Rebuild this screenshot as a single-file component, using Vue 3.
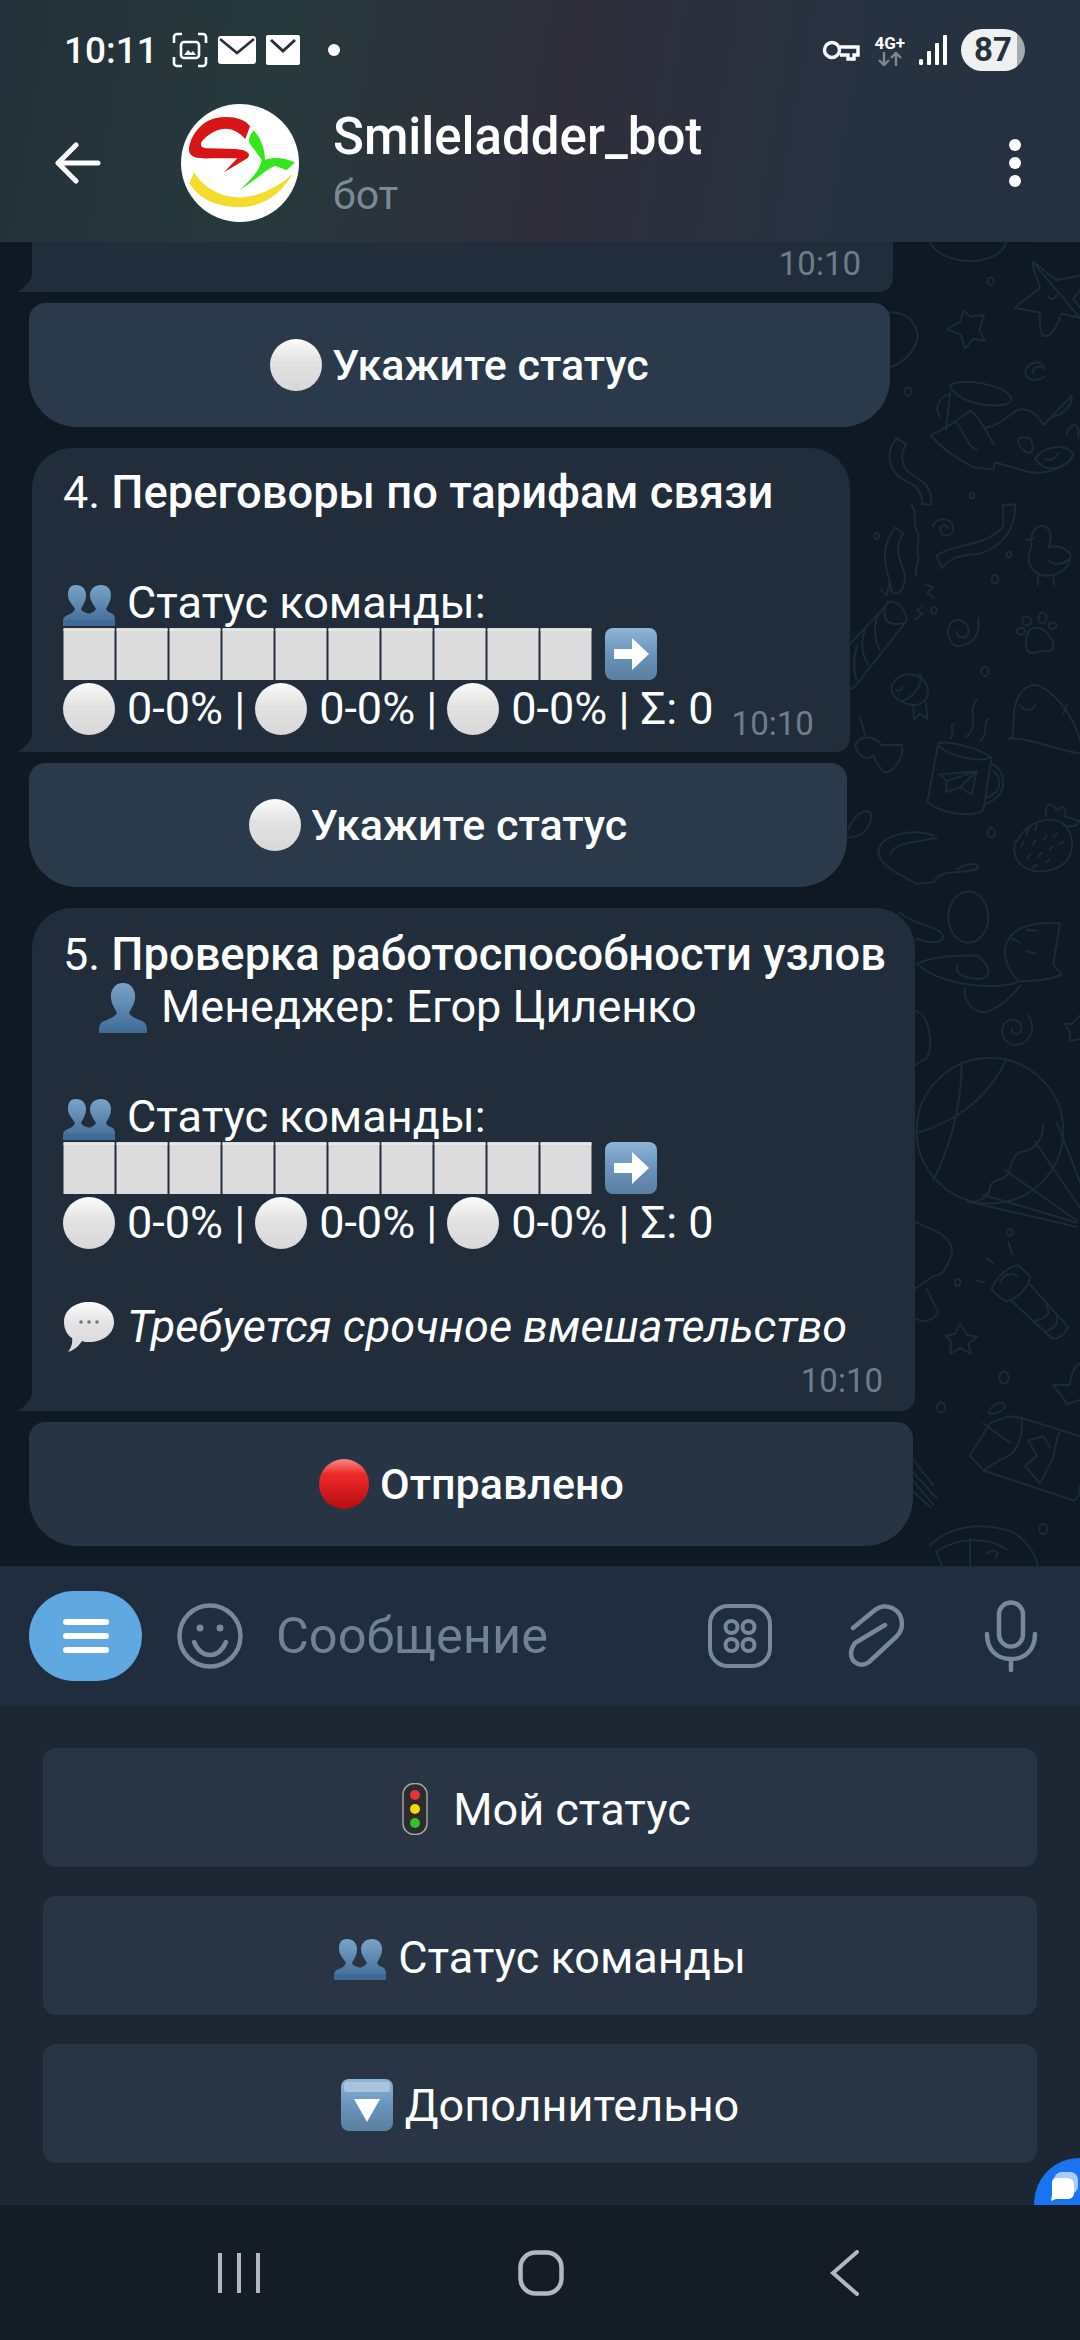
<template>
  <div class="phone">
    <svg class="defs" width="0" height="0" aria-hidden="true">
      <defs>
        <linearGradient id="g-white" x1="0" y1="0" x2="0" y2="1">
          <stop offset="0" stop-color="#fbfbfb" />
          <stop offset="0.45" stop-color="#e2e2e2" />
          <stop offset="1" stop-color="#d8d8d8" />
        </linearGradient>
        <linearGradient id="g-red" x1="0" y1="0" x2="0" y2="1">
          <stop offset="0" stop-color="#f58a8a" />
          <stop offset="0.3" stop-color="#ee2a2a" />
          <stop offset="1" stop-color="#b80d12" />
        </linearGradient>
        <linearGradient id="g-bust" x1="0" y1="0" x2="0" y2="1">
          <stop offset="0" stop-color="#7ba3c9" />
          <stop offset="1" stop-color="#3f6a96" />
        </linearGradient>
        <linearGradient id="g-tile" x1="0" y1="0" x2="0" y2="1">
          <stop offset="0" stop-color="#8fb4d6" />
          <stop offset="0.5" stop-color="#6a94bd" />
          <stop offset="1" stop-color="#5a7f9f" />
        </linearGradient>
        <symbol id="e-white" viewBox="0 0 52 52">
          <circle cx="26" cy="26" r="26" fill="url(#g-white)" />
        </symbol>
        <symbol id="e-red" viewBox="0 0 52 52">
          <circle cx="26" cy="26" r="25" fill="url(#g-red)" />
        </symbol>
        <symbol id="e-square" viewBox="0 0 52 52">
          <rect x="0.5" width="51" height="52" fill="#dcdcdc" />
          <rect x="0.5" y="1" width="51" height="2" fill="#e6e6e6" />
        </symbol>
        <symbol id="e-arrow" viewBox="0 0 52 52">
          <rect width="52" height="52" rx="8" fill="url(#g-tile)" />
          <path d="M9 21h18V10l17 16-17 16V31H9z" fill="#fff" />
        </symbol>
        <symbol id="e-down" viewBox="0 0 52 52">
          <rect width="52" height="52" rx="8" fill="url(#g-tile)" />
          <rect x="3" y="3" width="46" height="10" rx="3" fill="#a9c4dc" />
          <path d="M13 20h26L26 43z" fill="#fff" />
        </symbol>
        <symbol id="e-bust" viewBox="0 0 52 52">
          <path d="M26 2c9 0 13 8 12 16-1 6-4 10-6 14 2 4 8 6 13 8 3 1 5 4 5 10v2H2v-2c0-6 2-9 5-10 5-2 11-4 13-8-2-4-5-8-6-14C13 10 17 2 26 2z" fill="url(#g-bust)" />
        </symbol>
        <symbol id="e-busts" viewBox="0 0 52 52">
          <path d="M38 8c6 0 10 4 10 10 0 6-3 10-5 14 1 3 5 4 7 5 1 1 2 3 2 6v6H26V37c3-1 6-3 7-5-2-4-6-8-6-14 0-6 5-10 11-10z" fill="url(#g-bust)" />
          <path d="M13 8c6 0 10 4 10 10 0 6-3 10-5 14 1 3 6 4 9 5 3 2 5 6 5 12H0v-6c1-3 2-4 5-5 3-1 6-3 7-6-2-4-7-8-7-14C5 12 7 8 13 8z" fill="url(#g-bust)" />
          <rect y="43" width="52" height="6" fill="#3f6a96" />
        </symbol>
        <symbol id="e-speech" viewBox="0 0 52 52">
          <path d="M26 1c14 0 25 8 25 20S40 41 26 41c-3 0-5 0-7-1-3 5-8 9-14 11 3-4 5-9 4-14C4 34 1 28 1 21 1 9 12 1 26 1z" fill="url(#g-white)" />
          <circle cx="18" cy="21" r="1.8" fill="#777" />
          <circle cx="26" cy="21" r="1.8" fill="#777" />
          <circle cx="34" cy="21" r="1.8" fill="#777" />
        </symbol>
        <symbol id="e-traffic" viewBox="0 0 52 52">
          <rect x="14" y="0.5" width="24" height="51" rx="11" fill="#2c2c2c" stroke="#a8a8a8" stroke-width="1.4" />
          <circle cx="26" cy="12" r="5" fill="#e8323c" />
          <circle cx="26" cy="26" r="5" fill="#f2d90e" />
          <circle cx="26" cy="40" r="5" fill="#2fc22f" />
        </symbol>
      </defs>
    </svg>

    <header class="topbar">
      <div class="status-bar">
        <div class="status-left">
          <span class="clock">10:11</span>
          <svg class="ic-shot" width="36" height="36" viewBox="0 0 36 36" fill="none" stroke="#fff" stroke-width="2.6">
            <path d="M2 11V5a3 3 0 013-3h5M26 2h5a3 3 0 013 3v6M34 25v6a3 3 0 01-3 3h-5M10 34H5a3 3 0 01-3-3v-6" />
            <rect x="9" y="10" width="18" height="16" rx="3" />
            <path d="M12 23l4-5 3 3 2-2 3 4z" fill="#fff" stroke="none" />
          </svg>
          <svg width="38" height="28" viewBox="0 0 38 28">
            <rect width="38" height="28" rx="3" fill="#fff" />
            <path d="M2 3l17 14L36 3" fill="none" stroke="#26313e" stroke-width="2.6" />
          </svg>
          <svg width="34" height="30" viewBox="0 0 34 30">
            <rect width="34" height="30" rx="2" fill="#fff" />
            <path d="M5 5l12 11L29 5" fill="none" stroke="#26313e" stroke-width="3" />
          </svg>
          <span class="status-dot"></span>
        </div>
        <div class="status-right">
          <svg width="38" height="22" viewBox="0 0 38 22" fill="none" stroke="#fff" stroke-width="3.4">
            <circle cx="10" cy="11" r="7.5" />
            <path d="M18 8h18v8h-4v4h-6v-4h-8" />
          </svg>
          <div class="net">
            <span class="net-type">4G+</span>
            <svg width="26" height="14" viewBox="0 0 26 14" fill="none" stroke="#7c8791" stroke-width="2.4">
              <path d="M7 0v13M2 8l5 5 5-5M19 14V1M14 6l5-5 5 5" />
            </svg>
          </div>
          <svg width="28" height="30" viewBox="0 0 28 30" fill="#fff">
            <rect x="0" y="24" width="4" height="6" rx="1.5" />
            <rect x="8" y="16" width="4" height="14" rx="1" />
            <rect x="16" y="8" width="4" height="22" rx="1" />
            <rect x="24" y="0" width="4" height="30" rx="1" />
          </svg>
          <div class="battery">87</div>
        </div>
      </div>
      <div class="chat-title">
        <svg class="back" width="46" height="42" viewBox="0 0 46 42" fill="none" stroke="#fff" stroke-width="5" stroke-linecap="round" stroke-linejoin="round">
          <path d="M43 21H4M21 3L3 21l18 18" />
        </svg>
        <svg class="avatar" width="118" height="118" viewBox="93 73 354 354">
          <circle cx="270" cy="250" r="177" fill="#fff" />
          <path d="M300 140c-16-24-60-34-105-24-48 12-78 62-78 96 2 30 50 24 80 24l65 0-40 42 70-42c14-14-2-26-36-28l-85-2c-25-2-25-18 5-40 32-24 72-30 110 12z" fill="#d81414" />
          <path d="M310 152c-10 13-15 28-12 38l37 50c-5 34-35 62-67 92 52-32 75-60 107-74l35 14 25-24c-35-16-65-16-90-8 0-25-10-65-35-88z" fill="#33e81a" />
          <path d="M132 278c38 62 108 84 168 72 50-10 100-40 128-68-33 58-88 103-168 100-70-2-120-32-142-72z" fill="#f3dc2c" />
        </svg>
        <div class="title-text">
          <div class="bot-name">Smileladder_bot</div>
          <div class="bot-sub">бот</div>
        </div>
        <svg class="more" width="12" height="48" viewBox="0 0 12 48" fill="#fff">
          <circle cx="6" cy="6" r="6" />
          <circle cx="6" cy="24" r="6" />
          <circle cx="6" cy="42" r="6" />
        </svg>
      </div>
    </header>

    <main class="chat">
      <svg class="doodles" width="1080" height="1324" viewBox="0 0 1080 1324" fill="none" stroke="#1d2a37" stroke-width="2" stroke-linejoin="round" stroke-linecap="round">
        <!-- right column, upper part -->
        <g transform="translate(840 -2) scale(0.3333 0.4209)">
          <path vector-effect="non-scaling-stroke" d="M578 52C600 60 625 85 650 95L720 85M720 185L665 175C650 205 635 232 610 228 595 215 600 180 600 172L525 162C540 145 590 125 600 112 590 90 578 70 578 52ZM625 135C635 145 645 140 650 130M720 120L700 140 720 160" />
          <path vector-effect="non-scaling-stroke" d="M370 168L392 182 432 178 418 215 435 240 400 235 375 258 362 225 322 212 360 195Z" />
          <path vector-effect="non-scaling-stroke" d="M612 300C600 285 565 290 556 310 552 330 580 340 612 325M612 305C595 295 575 305 580 315" />
          <path vector-effect="non-scaling-stroke" d="M270 5C300 60 470 70 500 5M150 172C220 170 240 220 230 240 220 270 180 295 150 302" />
          <path vector-effect="non-scaling-stroke" d="M330 345C360 325 510 345 515 380 505 405 350 395 330 345ZM330 365C300 370 280 400 300 420M330 365L318 450M272 465C300 450 340 440 390 405 420 420 450 470 460 485M272 465C300 490 340 515 400 540L460 545 465 528 560 550C620 560 680 540 700 510M440 445C480 440 500 420 530 405 560 395 590 410 610 440L695 370C700 385 680 410 640 420M350 435C370 450 380 490 410 498" />
          <path vector-effect="non-scaling-stroke" d="M585 520C610 490 680 480 700 510 690 540 620 560 585 520ZM615 520C630 525 650 520 655 505M560 505C530 490 525 465 550 470 570 465 585 480 575 505ZM680 460C700 425 720 440 715 470" />
          <path vector-effect="non-scaling-stroke" d="M170 470L198 485C175 520 190 545 220 560 255 575 275 590 275 628L248 628C245 590 220 580 190 570 150 550 130 510 170 470Z" />
          <path vector-effect="non-scaling-stroke" d="M215 630C235 650 215 670 230 690 245 710 225 730 235 750 240 770 220 780 230 798" />
          <path vector-effect="non-scaling-stroke" d="M278 680C290 655 340 660 340 685 335 710 300 705 300 685 305 675 320 675 325 685" />
          <path vector-effect="non-scaling-stroke" d="M290 750C340 720 440 730 490 680 490 660 490 640 488 630L525 628C530 680 490 730 420 745 380 750 340 745 305 780Z" />
          <path vector-effect="non-scaling-stroke" d="M600 680C630 675 640 705 625 730 650 725 680 730 692 750 690 785 640 805 600 795 570 785 555 760 575 730 570 700 580 685 600 680ZM595 795L592 820M640 800L642 820M625 760C640 775 670 770 685 760M580 710L560 712" />
          <path vector-effect="non-scaling-stroke" d="M165 683L190 698C160 730 180 760 195 795 195 830 175 850 155 835 150 800 130 780 135 740 140 710 155 695 165 683ZM122 830L140 845 148 815" />
          <path vector-effect="non-scaling-stroke" d="M150 858C175 860 200 880 200 905L40 1065 20 1065M150 858C130 865 130 890 140 905 155 915 185 915 200 905M30 960L150 858M120 975C100 945 100 910 118 885M85 1010C65 985 60 960 75 925M50 1045C40 1020 40 1000 50 965" />
          <path vector-effect="non-scaling-stroke" d="M255 818L280 825 262 838 280 850M248 868L230 880 248 888 225 902" />
          <path vector-effect="non-scaling-stroke" d="M415 900C425 950 380 965 350 965 320 955 315 920 340 905 365 895 390 915 385 935 375 950 350 945 350 930" />
          <path vector-effect="non-scaling-stroke" d="M570 925C595 915 620 925 630 945 650 960 640 985 610 975 590 980 560 990 558 965 555 945 560 935 570 925Z" />
          <ellipse vector-effect="non-scaling-stroke" cx="543" cy="929" rx="12" ry="8" />
          <ellipse vector-effect="non-scaling-stroke" cx="560" cy="905" rx="13" ry="11" />
          <ellipse vector-effect="non-scaling-stroke" cx="608" cy="898" rx="12" ry="13" />
          <ellipse vector-effect="non-scaling-stroke" cx="638" cy="916" rx="12" ry="8" />
          <path vector-effect="non-scaling-stroke" d="M155 1060C170 1025 240 1020 262 1060 270 1090 250 1105 220 1105 180 1100 150 1085 155 1060ZM220 1105L222 1140 240 1125 262 1138 258 1100M190 1095C230 1080 250 1050 240 1030M168 1068C175 1075 185 1070 188 1062" />
          <path vector-effect="non-scaling-stroke" d="M45 1200C60 1175 100 1175 125 1200L185 1200C195 1225 160 1265 135 1265 110 1250 105 1230 100 1225 75 1240 55 1225 45 1200ZM60 1135L75 1175" />
          <path vector-effect="non-scaling-stroke" d="M295 1195L262 1335C300 1360 390 1375 430 1355L455 1230C420 1210 340 1190 295 1195ZM300 1205C340 1230 420 1240 450 1230M455 1245C500 1260 510 1320 435 1340M460 1262C485 1275 490 1310 440 1325M300 1270L410 1262 395 1318 360 1300 318 1312 320 1285ZM320 1285L410 1262M360 1300L410 1262M330 1185C350 1165 325 1155 340 1150M380 1180C420 1150 380 1120 410 1092M420 1190C450 1170 425 1150 445 1138" />
          <path vector-effect="non-scaling-stroke" d="M505 1185C520 1185 520 1170 522 1120 530 1070 570 1050 600 1060 650 1080 700 1130 720 1190M505 1185C560 1180 640 1210 720 1220M540 1105C555 1120 575 1120 585 1105M670 1125L680 1105" />
          <path vector-effect="non-scaling-stroke" d="M530 1430C560 1380 640 1360 680 1395 710 1430 700 1480 640 1495 580 1510 510 1490 525 1430ZM620 1370C610 1330 640 1340 650 1355 670 1340 680 1350 675 1370L718 1380C710 1395 690 1395 670 1390M565 1400L560 1412M590 1390L585 1402M550 1430L545 1442M585 1425L580 1437M620 1415L612 1425M650 1410L640 1418M570 1460L562 1470M605 1455L595 1465M640 1440L630 1448M670 1430L660 1436M590 1485L580 1490M630 1470L620 1478" />
          <path vector-effect="non-scaling-stroke" d="M280 1415C240 1400 130 1405 115 1450 115 1490 190 1510 230 1530L285 1525C290 1490 400 1510 415 1490 410 1475 370 1485 350 1495M150 1460C160 1430 240 1430 290 1420M20 1420C80 1420 100 1380 90 1360 70 1350 40 1370 25 1400" />
          <circle vector-effect="non-scaling-stroke" cx="452" cy="98" r="9" />
          <circle vector-effect="non-scaling-stroke" cx="203" cy="360" r="10" />
          <circle vector-effect="non-scaling-stroke" cx="396" cy="607" r="7" />
          <circle vector-effect="non-scaling-stroke" cx="507" cy="747" r="7" />
          <circle vector-effect="non-scaling-stroke" cx="465" cy="806" r="10" />
          <circle vector-effect="non-scaling-stroke" cx="435" cy="1025" r="11" />
          <circle vector-effect="non-scaling-stroke" cx="454" cy="1408" r="11" />
          <circle vector-effect="non-scaling-stroke" cx="110" cy="703" r="7" />
          <circle vector-effect="non-scaling-stroke" cx="282" cy="880" r="8" />
        </g>
        <!-- right column, lower part -->
        <g transform="translate(880 658) scale(0.3333 0.4273)">
          <circle vector-effect="non-scaling-stroke" cx="265" cy="40" r="60" />
          <path vector-effect="non-scaling-stroke" d="M60 30C100 60 190 60 190 90 170 110 110 90 110 90M110 150C160 130 240 130 290 130 330 150 340 180 300 185 250 185 220 170 235 150M120 155C200 205 360 210 420 190M255 205C250 240 280 265 320 262 360 250 400 225 420 200" />
          <path vector-effect="non-scaling-stroke" d="M380 100C400 60 470 50 540 55L530 100 520 150 545 175C500 190 450 190 420 190 385 170 365 130 380 100ZM395 90L420 100M440 120L465 125M440 70L470 72" />
          <path vector-effect="non-scaling-stroke" d="M445 270C475 310 440 340 400 340 365 330 355 300 380 285 410 270 435 295 420 310 405 320 395 310 395 300" />
          <path vector-effect="non-scaling-stroke" d="M600 270L575 290 555 290 570 310 570 330 600 325" />
          <ellipse vector-effect="non-scaling-stroke" cx="330" cy="540" rx="220" ry="170" />
          <path vector-effect="non-scaling-stroke" d="M245 380C245 480 210 580 160 655M110 545C210 525 320 470 378 375M270 705C300 710 330 690 330 670 340 650 370 660 385 640 395 620 400 595 420 590 450 590 490 570 490 525M310 690L590 755M260 705L590 765M375 632L590 750M465 565L600 720M530 520L600 660" />
          <path vector-effect="non-scaling-stroke" d="M335 910C350 880 390 855 415 855L450 880C450 900 420 930 380 940 360 930 340 920 335 910ZM450 900L565 1000C550 1020 530 1030 515 1025L390 935M360 895C370 875 400 870 410 880M500 950C510 965 510 975 465 985M530 975C535 990 530 1000 495 1010M290 890L312 895M322 840L340 850M385 800L398 830" />
          <path vector-effect="non-scaling-stroke" d="M240 992L262 1018 292 1022 265 1038 272 1062 242 1048 210 1062 215 1035 197 1020 225 1015Z" />
          <path vector-effect="non-scaling-stroke" d="M108 260C150 270 160 340 140 370L108 385M108 755C160 770 225 790 215 830 200 860 190 880 160 880L105 910M140 910L175 965C160 985 130 990 108 980" />
          <path vector-effect="non-scaling-stroke" d="M600 1085C580 1090 570 1120 570 1135L520 1135C530 1150 550 1160 560 1180L600 1170" />
          <path vector-effect="non-scaling-stroke" d="M425 1212L600 1255M310 1335L580 1405C600 1400 600 1380 600 1370M270 1300L330 1225 385 1208 425 1212C430 1260 410 1300 360 1310L310 1335 270 1300ZM310 1225L390 1270M540 1245C520 1270 530 1300 510 1320L480 1365 435 1325 470 1300 445 1265 490 1255 510 1280M325 1200C340 1175 375 1170 375 1185 365 1200 340 1205 325 1200Z" />
          <path vector-effect="non-scaling-stroke" d="M150 1510C200 1470 300 1450 400 1480 440 1500 465 1530 475 1558M170 1525C230 1490 330 1490 380 1520M270 1495L270 1558M170 1525L185 1558M320 1530C340 1515 365 1525 345 1540" />
          <path vector-effect="non-scaling-stroke" d="M100 1310L160 1370M100 1340L170 1400M100 1360L160 1415M100 1385L150 1420" />
          <circle vector-effect="non-scaling-stroke" cx="390" cy="778" r="8" />
          <circle vector-effect="non-scaling-stroke" cx="233" cy="895" r="8" />
          <circle vector-effect="non-scaling-stroke" cx="372" cy="1118" r="14" />
          <circle vector-effect="non-scaling-stroke" cx="183" cy="1188" r="12" />
          <circle vector-effect="non-scaling-stroke" cx="490" cy="1472" r="12" />
        </g>
      </svg>

      <section class="bubble bubble-stub">
        <span class="time">10:10</span>
      </section>
      <div class="inline-btn btn-first">
        <svg class="emo"><use href="#e-white" /></svg>
        <span>Укажите статус</span>
      </div>

      <section class="bubble bubble-four">
        <div class="line"><span>4. <b>Переговоры по тарифам связи</b></span></div>
        <div class="line line-gap emo-line">
          <svg class="emo"><use href="#e-busts" /></svg>
          <span>Статус команды:</span>
        </div>
        <div class="bar">
          <svg v-for="n in 10" :key="n" class="emo"><use href="#e-square" /></svg>
          <svg class="emo arrow"><use href="#e-arrow" /></svg>
        </div>
        <div class="line emo-line counts">
          <template v-for="n in 3" :key="n">
            <svg class="emo"><use href="#e-white" /></svg>
            <span>0-0% {{ n < 3 ? '|' : '| Σ: 0' }}</span>
          </template>
          <span class="time time-inline">10:10</span>
        </div>
      </section>
      <div class="inline-btn btn-second">
        <svg class="emo"><use href="#e-white" /></svg>
        <span>Укажите статус</span>
      </div>

      <section class="bubble bubble-five">
        <div class="line"><span>5. <b>Проверка работоспособности узлов</b></span></div>
        <div class="line emo-line manager">
          <svg class="emo"><use href="#e-bust" /></svg>
          <span>Менеджер: Егор Циленко</span>
        </div>
        <div class="line line-gap emo-line">
          <svg class="emo"><use href="#e-busts" /></svg>
          <span>Статус команды:</span>
        </div>
        <div class="bar">
          <svg v-for="n in 10" :key="n" class="emo"><use href="#e-square" /></svg>
          <svg class="emo arrow"><use href="#e-arrow" /></svg>
        </div>
        <div class="line emo-line counts">
          <template v-for="n in 3" :key="n">
            <svg class="emo"><use href="#e-white" /></svg>
            <span>0-0% {{ n < 3 ? '|' : '| Σ: 0' }}</span>
          </template>
        </div>
        <div class="line line-gap-short emo-line">
          <svg class="emo"><use href="#e-speech" /></svg>
          <i>Требуется срочное вмешательство</i>
        </div>
        <div class="time-row"><span class="time">10:10</span></div>
      </section>
      <div class="inline-btn btn-third">
        <svg class="emo"><use href="#e-red" /></svg>
        <span>Отправлено</span>
      </div>
    </main>

    <div class="input-bar">
      <div class="menu-btn">
        <span></span><span></span><span></span>
      </div>
      <svg class="smile" width="66" height="66" viewBox="0 0 66 66" fill="none" stroke="#76889a" stroke-width="4.5" stroke-linecap="round">
        <circle cx="33" cy="33" r="30.5" />
        <path d="M17 39c4 9 10 13 16 13s12-4 16-13" />
        <circle cx="23" cy="25" r="3.5" fill="#76889a" stroke="none" />
        <circle cx="43" cy="25" r="3.5" fill="#76889a" stroke="none" />
      </svg>
      <span class="placeholder">Сообщение</span>
      <svg class="stickers" width="66" height="66" viewBox="0 0 66 66" fill="none" stroke="#76889a" stroke-width="4">
        <rect x="3" y="3" width="60" height="60" rx="18" />
        <circle cx="24.5" cy="24" r="6" />
        <circle cx="41.5" cy="24" r="6" />
        <circle cx="24.5" cy="42" r="6" />
        <circle cx="41.5" cy="42" r="6" />
      </svg>
      <svg class="clip" width="58" height="66" viewBox="0 0 58 66" fill="none" stroke="#76889a" stroke-width="4.5" stroke-linecap="round" stroke-linejoin="round">
        <path d="M5 25L27 7c10-8 27-2 27 14 0 5-2 9-6 13L21 59c-8 6-18 1-18-9 0-4 2-7 4-10L37 22" />
      </svg>
      <svg class="mic" width="54" height="72" viewBox="0 0 54 72" fill="none" stroke="#76889a" stroke-width="4.5" stroke-linecap="round">
        <rect x="15" y="2.5" width="24" height="44" rx="12" />
        <path d="M3 34c0 16 10 25 24 25s24-9 24-25M27 59v11" />
      </svg>
    </div>

    <div class="keyboard">
      <div class="key">
        <svg class="emo"><use href="#e-traffic" /></svg>
        <span>Мой статус</span>
      </div>
      <div class="key">
        <svg class="emo"><use href="#e-busts" /></svg>
        <span>Статус команды</span>
      </div>
      <div class="key">
        <svg class="emo"><use href="#e-down" /></svg>
        <span>Дополнительно</span>
      </div>
      <svg class="float-chat" width="46" height="47" viewBox="0 0 46 47">
        <path d="M46 0C20 0 0 20 0 47h46z" fill="#1a73f0" />
        <rect x="20" y="14" width="24" height="22" rx="8" fill="#a9cbf6" />
        <path d="M22 20h10c6 0 8 3 8 7v8c0 4-3 6-7 6H22l-5 2 1-6v-11c0-4 1-6 4-6z" fill="#fff" />
      </svg>
    </div>

    <nav class="nav-bar">
      <svg width="42" height="44" viewBox="0 0 42 44" fill="none" stroke="#b4b8bc" stroke-width="4">
        <path d="M2 2v40M21 2v40M40 2v40" />
      </svg>
      <svg width="46" height="46" viewBox="0 0 46 46" fill="none" stroke="#b4b8bc" stroke-width="4.5">
        <rect x="2.5" y="2.5" width="41" height="41" rx="15" />
      </svg>
      <svg width="30" height="46" viewBox="0 0 30 46" fill="none" stroke="#b4b8bc" stroke-width="4" stroke-linecap="round">
        <path d="M27 2L3 23l24 21" />
      </svg>
    </nav>
  </div>
</template>

<script setup>
</script>

<style>
html, body {
  margin: 0;
  background: #0f1923;
}
</style>

<style scoped>
.phone {
  width: 1080px;
  height: 2340px;
  display: flex;
  flex-direction: column;
  overflow: hidden;
  font-family: Roboto, "Noto Sans", sans-serif;
  color: #fff;
  position: relative;
}

.defs {
  position: absolute;
}

.topbar {
  height: 242px;
  flex-shrink: 0;
  box-sizing: border-box;
  background: linear-gradient(100deg, #233039 0%, #27393c 25%, #2f2e3a 52%, #273241 78%, #253140 100%);
  position: relative;
  z-index: 2;
}

.status-bar {
  height: 100px;
  display: flex;
  justify-content: space-between;
  align-items: center;
  padding: 0 55px 0 64px;
}

.status-left,
.status-right {
  display: flex;
  align-items: center;
}

.status-left svg {
  margin-left: 10px;
}

.clock {
  font-size: 37px;
  font-weight: 500;
  margin-right: 4px;
}

.status-dot {
  width: 12px;
  height: 12px;
  border-radius: 50%;
  background: #fff;
  margin-left: 28px;
}

.status-right {
  gap: 14px;
}

.net {
  display: flex;
  flex-direction: column;
  align-items: center;
  gap: 1px;
}

.net-type {
  font-size: 17px;
  font-weight: 700;
  line-height: 16px;
}

.battery {
  width: 64px;
  height: 42px;
  border-radius: 21px;
  background: linear-gradient(90deg, #eef0f2 0 88%, #a6abb0 88%);
  color: #26313e;
  font-size: 33px;
  font-weight: 700;
  line-height: 42px;
  text-align: center;
}

.chat-title {
  height: 126px;
  margin-top: 0;
  display: flex;
  align-items: center;
  padding: 0 62px 0 55px;
}

.avatar {
  margin-left: 80px;
  flex-shrink: 0;
}

.title-text {
  margin-left: 34px;
  flex: 1;
}

.more {
  margin-right: -3px;
}

.bot-name {
  font-size: 51px;
  font-weight: 500;
  line-height: 58px;
}

.bot-sub {
  font-size: 41px;
  line-height: 46px;
  color: #7c8a98;
  margin-top: 6px;
}

.chat {
  flex: 1;
  min-height: 0;
  background: #0f1923;
  position: relative;
  display: flex;
  flex-direction: column;
  align-items: flex-start;
  font-size: 45px;
}

.doodles {
  position: absolute;
  left: 0;
  top: 0;
}

.bubble {
  position: relative;
  background: #212d3b;
  box-sizing: border-box;
  border-radius: 40px 40px 14px 0;
  margin-left: 32px;
  line-height: 52px;
}

.bubble::before {
  content: "";
  position: absolute;
  left: -15px;
  bottom: 0;
  width: 16px;
  height: 24px;
  background: #212d3b;
  clip-path: path("M16 0 C16 12 8 20 0 24 L16 24 Z");
}

.bubble-stub {
  width: 861px;
  height: 50px;
  border-radius: 0 0 14px 0;
  display: flex;
  justify-content: flex-end;
  padding-right: 32px;
}

.bubble-four {
  width: 818px;
  margin-top: 21px;
  padding: 19px 0 17px 31px;
}

.bubble-five {
  width: 883px;
  margin-top: 21px;
  padding: 21px 0 8px 31px;
}

.line {
  height: 52px;
  white-space: nowrap;
}

.line b {
  font-size: 45.3px;
  font-weight: 500;
}

.line-gap {
  margin-top: 58px;
}

.line-gap-short {
  margin-top: 52px;
}

.emo-line {
  display: flex;
  align-items: center;
}

.emo-line > span,
.emo-line > i {
  margin-left: 12px;
}

.emo {
  width: 52px;
  height: 52px;
  flex-shrink: 0;
}

.manager {
  padding-left: 34px;
}

.bar {
  display: flex;
  height: 52px;
  margin-top: -1px;
}

.bar .emo {
  margin-right: 1px;
}

.bar .arrow {
  margin-left: 12px;
}

.counts {
  margin-top: 3px;
}

.counts > span {
  margin-right: 10px;
}

.time {
  font-size: 33px;
  color: #6d7d8c;
  line-height: 44px;
}

.time-inline {
  margin: 30px 0 0 8px !important;
}

.time-row {
  display: flex;
  justify-content: flex-end;
  padding-right: 32px;
  margin-top: 6px;
}

.inline-btn {
  height: 124px;
  margin-top: 11px;
  margin-left: 29px;
  box-sizing: border-box;
  background: #2a3a4b;
  border-radius: 16px 16px 48px 48px;
  display: flex;
  align-items: center;
  justify-content: center;
  gap: 10px;
  font-size: 43px;
  font-weight: 500;
}

.btn-first {
  width: 861px;
}

.btn-second {
  width: 818px;
}

.btn-third {
  width: 884px;
  background: #273444;
}

.input-bar {
  height: 139px;
  flex-shrink: 0;
  background: #1f2d3e;
  display: flex;
  align-items: center;
  padding: 0 42px 0 29px;
}

.menu-btn {
  width: 113px;
  height: 90px;
  border-radius: 45px;
  background: #5fa8e0;
  display: flex;
  flex-direction: column;
  align-items: center;
  justify-content: center;
  gap: 8px;
  flex-shrink: 0;
}

.menu-btn span {
  width: 46px;
  height: 6px;
  border-radius: 3px;
  background: #fff;
}

.smile {
  margin-left: 35px;
  flex-shrink: 0;
}

.placeholder {
  margin-left: 33px;
  font-size: 50.5px;
  color: #70818f;
  flex: 1;
}

.clip {
  margin-left: 75px;
}

.mic {
  margin-left: 78px;
}

.keyboard {
  height: 500px;
  flex-shrink: 0;
  box-sizing: border-box;
  background: #1d2733;
  padding: 43px 43px 0;
  display: flex;
  flex-direction: column;
  gap: 29px;
  position: relative;
}

.key {
  height: 119px;
  box-sizing: border-box;
  padding-top: 3px;
  border-radius: 13px;
  background: #293544;
  display: flex;
  align-items: center;
  justify-content: center;
  gap: 12px;
  font-size: 45px;
}

.float-chat {
  position: absolute;
  right: 0;
  bottom: 0;
}

.nav-bar {
  height: 135px;
  flex-shrink: 0;
  background: #141c25;
  display: flex;
  align-items: center;
  padding-left: 218px;
}

.nav-bar svg:nth-child(2) {
  margin-left: 258px;
}

.nav-bar svg:nth-child(3) {
  margin-left: 266px;
}
</style>
